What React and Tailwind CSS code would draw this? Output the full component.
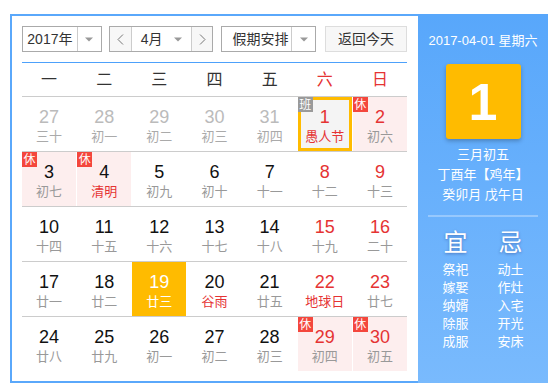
import React from 'react';

const RED = 'text-[#e53333]';

const weeks = [
  [
    { d: 27, l: '三十', other: true },
    { d: 28, l: '初一', other: true },
    { d: 29, l: '初二', other: true },
    { d: 30, l: '初三', other: true },
    { d: 31, l: '初四', other: true },
    { d: 1, l: '愚人节', fest: true, badge: '班', selected: true },
    { d: 2, l: '初六', badge: '休' },
  ],
  [
    { d: 3, l: '初七', badge: '休' },
    { d: 4, l: '清明', fest: true, badge: '休' },
    { d: 5, l: '初九' },
    { d: 6, l: '初十' },
    { d: 7, l: '十一' },
    { d: 8, l: '十二' },
    { d: 9, l: '十三' },
  ],
  [
    { d: 10, l: '十四' },
    { d: 11, l: '十五' },
    { d: 12, l: '十六' },
    { d: 13, l: '十七' },
    { d: 14, l: '十八' },
    { d: 15, l: '十九' },
    { d: 16, l: '二十' },
  ],
  [
    { d: 17, l: '廿一' },
    { d: 18, l: '廿二' },
    { d: 19, l: '廿三', today: true },
    { d: 20, l: '谷雨', fest: true },
    { d: 21, l: '廿五' },
    { d: 22, l: '地球日', fest: true },
    { d: 23, l: '廿七' },
  ],
  [
    { d: 24, l: '廿八' },
    { d: 25, l: '廿九' },
    { d: 26, l: '初一' },
    { d: 27, l: '初二' },
    { d: 28, l: '初三' },
    { d: 29, l: '初四', badge: '休' },
    { d: 30, l: '初五', badge: '休' },
  ],
];

const yi = ['祭祀', '嫁娶', '纳婿', '除服', '成服'];
const ji = ['动土', '作灶', '入宅', '开光', '安床'];

function Caret() {
  return (
    <svg width="8" height="5" viewBox="0 0 8 5">
      <path d="M0 0.5 L8 0.5 L4 4.5 Z" fill="#999" />
    </svg>
  );
}

function Chevron({ dir }) {
  return (
    <svg width="7" height="11" viewBox="0 0 7 11">
      <path d={dir === 'left' ? 'M6 0.5 L1 5.5 L6 10.5' : 'M1 0.5 L6 5.5 L1 10.5'} fill="none" stroke="#777" strokeWidth="1" />
    </svg>
  );
}

function Cell({ c, col }) {
  const weekend = col >= 5;
  let bg = '';
  if (c.today) bg = 'bg-[#ffbb00]';
  else if (c.selected) bg = 'bg-[#f4f4f4] border-[3px] border-[#ffbb00]';
  else if (c.badge === '休') bg = 'bg-[#fdeeee]';

  let numColor = 'text-[#111]';
  if (c.other) numColor = 'text-[#bbb]';
  else if (c.today) numColor = 'text-white';
  else if (weekend) numColor = RED;

  let lunarColor = 'text-[#999]';
  if (c.other) lunarColor = 'text-[#aaa]';
  if (c.fest) lunarColor = RED;
  if (c.today) lunarColor = 'text-white';

  return (
    <div className={`relative h-[54px] flex flex-col items-center ${c.selected ? 'pt-[6px]' : 'pt-[9px]'} ${bg}`}>
      {c.badge && (
        <span
          className={`absolute ${c.selected ? '-left-[3px] -top-[3px]' : 'left-0 top-0'} w-[15px] h-[15px] flex items-center justify-center text-[12px] leading-none text-white ${c.badge === '休' ? 'bg-[#f4473d]' : 'bg-[#9a9a9a]'}`}
        >
          {c.badge}
        </span>
      )}
      <div className={`text-[18px] leading-[22px] ${numColor}`}>{c.d}</div>
      <div className={`text-[13px] leading-[18px] ${lunarColor}`}>{c.l}</div>
    </div>
  );
}

export default function App() {
  return (
    <div
      className="pt-[14px] pl-[10px] bg-white min-h-[390px]"
      style={{ fontFamily: '"Liberation Sans", "Noto Sans CJK SC", sans-serif' }}
    >
      <div className="flex w-[538px] h-[369px]">
        {/* left calendar */}
        <div className="w-[408px] border-l-2 border-t-2 border-b-2 border-[#5aa8fb] pl-[10px] pt-[10px] bg-white">
          {/* toolbar */}
          <div className="flex h-[26px] w-[385px] text-[14px] text-[#333]">
            <div className="flex w-[80px] border border-[#aaa]">
              <div className="flex-1 flex items-center justify-center">2017年</div>
              <div className="w-[24px] border-l border-[#ccc] flex items-center justify-center">
                <Caret />
              </div>
            </div>
            <div className="ml-[7px] flex w-[105px] border border-[#aaa]">
              <div className="w-[22px] bg-[#f7f7f7] flex items-center justify-center border-r border-[#ccc]">
                <Chevron dir="left" />
              </div>
              <div className="flex-1 flex items-center pl-[9px] pr-[9px] justify-between">
                <span>4月</span>
                <Caret />
              </div>
              <div className="w-[21px] bg-[#f7f7f7] flex items-center justify-center border-l border-[#ccc]">
                <Chevron dir="right" />
              </div>
            </div>
            <div className="ml-[8px] flex w-[95px] border border-[#aaa]">
              <div className="flex-1 flex items-center pl-[10px]">假期安排</div>
              <div className="w-[24px] border-l border-[#ccc] flex items-center justify-center">
                <Caret />
              </div>
            </div>
            <button className="ml-[9px] w-[82px] bg-[#f7f7f7] border border-[#ddd] flex items-center justify-center text-[14px] text-[#333]">
              返回今天
            </button>
          </div>

          <div className="mt-[10px] h-px w-[385px] bg-[#4da1fb]" />

          {/* weekday header */}
          <div className="grid grid-cols-7 gap-x-px w-[385px] h-[33px] items-center text-[16px] text-[#333]">
            {['一', '二', '三', '四', '五', '六', '日'].map((w, i) => (
              <div key={w} className={`text-center ${i >= 5 ? RED : ''}`}>
                {w}
              </div>
            ))}
          </div>

          {/* weeks */}
          <div className="w-[385px]">
            {weeks.map((row, ri) => (
              <div key={ri} className="border-t border-[#ccc] grid grid-cols-7 gap-x-px">
                {row.map((c, ci) => (
                  <Cell key={ci} c={c} col={ci} />
                ))}
              </div>
            ))}
          </div>
        </div>

        {/* right info panel */}
        <div className="w-[130px] h-[369px] bg-gradient-to-b from-[#58a7fb] to-[#79bafd] flex flex-col items-center pt-[17px] text-white">
          <div className="text-[13px] leading-[20px]">2017-04-01 星期六</div>
          <div className="mt-[13px] w-[75px] h-[75px] rounded-[3px] bg-[#ffbb00] shadow-[0_2px_4px_rgba(0,0,0,0.25)] flex items-center justify-center text-[52px] leading-none font-bold">
            1
          </div>
          <div className="mt-[6px] text-[13px] leading-[20px] text-center">
            <div>三月初五</div>
            <div>丁酉年【鸡年】</div>
            <div>癸卯月 戊午日</div>
          </div>
          <div className="mt-[10px] w-[110px] h-[2px] bg-white/30" />
          <div className="mt-[12px] grid grid-cols-2 w-[110px] text-center">
            <div className="text-[24px] leading-[28px] [text-shadow:0_1px_3px_rgba(0,0,80,0.35)]">宜</div>
            <div className="text-[24px] leading-[28px] [text-shadow:0_1px_3px_rgba(0,0,80,0.35)]">忌</div>
            <div className="mt-[4px] text-[13px] leading-[18px]">
              {yi.map((t) => (
                <div key={t}>{t}</div>
              ))}
            </div>
            <div className="mt-[4px] text-[13px] leading-[18px]">
              {ji.map((t) => (
                <div key={t}>{t}</div>
              ))}
            </div>
          </div>
        </div>
      </div>
    </div>
  );
}
